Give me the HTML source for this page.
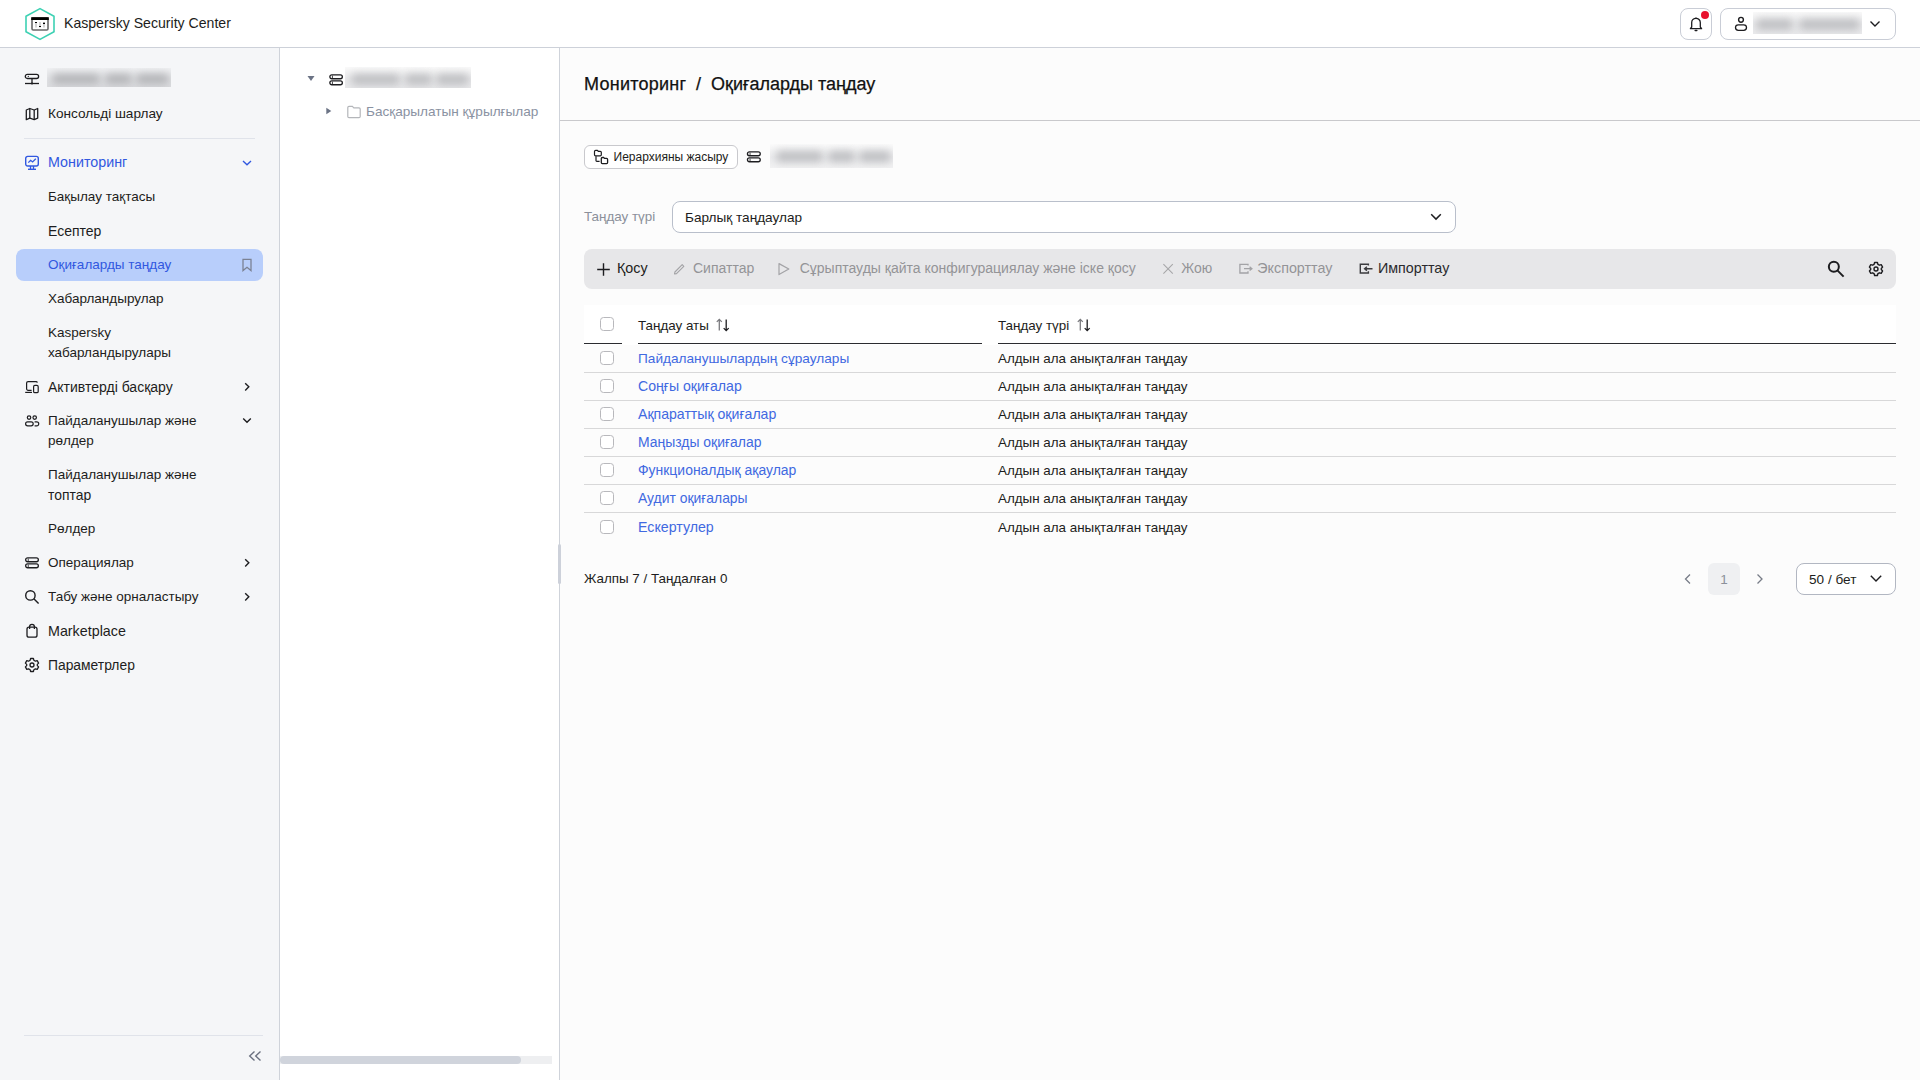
<!DOCTYPE html>
<html><head><meta charset="utf-8">
<style>
*{box-sizing:border-box;margin:0;padding:0}
html,body{width:1920px;height:1080px;overflow:hidden;background:#fcfcfc;font-family:"Liberation Sans",sans-serif;color:#1d1d20}
.a{position:absolute}
.t{position:absolute;white-space:nowrap;height:20px;line-height:20px;font-size:13.5px}
svg{position:absolute;overflow:visible}
#hdr{left:0;top:0;width:1920px;height:48px;background:#fff;border-bottom:1px solid #cdd1d9}
#side{left:0;top:48px;width:280px;height:1032px;background:#f5f6f8;border-right:1px solid #cfd3da}
#tree{left:280px;top:48px;width:280px;height:1032px;background:#fff;border-right:1px solid #cfd3da}
.bz{position:absolute;overflow:hidden;z-index:5}
.bz i{position:absolute;display:block;background:#a9aaad;filter:blur(3.5px);border-radius:4px}
</style></head><body>

<!-- HEADER -->
<div id="hdr" class="a">
  <svg style="left:0;top:0" width="80" height="48">
    <polygon points="40,8.6 54,16.3 54,31.7 40,39.4 26,31.7 26,16.3" fill="none" stroke="#3dd1b3" stroke-width="1.6" stroke-linejoin="round"/>
    <rect x="32" y="18" width="16" height="12" rx="1.2" fill="none" stroke="#6a6a6a" stroke-width="1.6"/>
    <rect x="31.2" y="17.2" width="17.6" height="2.8" fill="#000"/>
    <line x1="36" y1="22" x2="36" y2="27.5" stroke="#bbb" stroke-width="1.2"/>
    <line x1="40" y1="22" x2="40" y2="27.5" stroke="#bbb" stroke-width="1.2"/>
    <line x1="44" y1="22" x2="44" y2="27.5" stroke="#bbb" stroke-width="1.2"/>
    <line x1="35" y1="22.5" x2="37" y2="22.5" stroke="#000" stroke-width="1.2"/>
    <line x1="39" y1="26.5" x2="41" y2="26.5" stroke="#000" stroke-width="1.2"/>
    <line x1="43" y1="23.3" x2="45" y2="23.3" stroke="#000" stroke-width="1.2"/>
  </svg>
  <div class="t" style="left:64px;top:13px;font-size:14.1px">Kaspersky Security Center</div>

  <div class="a" style="left:1680px;top:8px;width:32px;height:32px;border:1px solid #c9cdd6;border-radius:8px"></div>
  <svg style="left:1680px;top:8px" width="32" height="32">
    <path d="M10.4 20.7 L21.6 20.7 L20.3 19 L20.3 14.6 A4.3 4.3 0 0 0 11.7 14.6 L11.7 19 Z" fill="none" stroke="#1d1d20" stroke-width="1.3" stroke-linejoin="round"/><circle cx="16" cy="9.9" r="0.6" fill="#1d1d20"/>
    <path d="M15.2 22.6 L16.8 22.6" stroke="#1d1d20" stroke-width="1.5" stroke-linecap="round"/>
    <circle cx="25" cy="7" r="4" fill="#e8112d"/>
  </svg>
  <div class="a" style="left:1720px;top:8px;width:176px;height:32px;border:1px solid #c9cdd6;border-radius:8px"></div>
  <svg style="left:1720px;top:8px" width="176" height="32">
    <circle cx="21" cy="11.8" r="2.4" fill="none" stroke="#1d1d20" stroke-width="1.4"/>
    <rect x="15.5" y="16.8" width="11" height="5.6" rx="2.8" fill="none" stroke="#1d1d20" stroke-width="1.3"/>
    <path d="M150.5 13.5 L155 18 L159.5 13.5" fill="none" stroke="#1d1d20" stroke-width="1.4"/>
  </svg>
  <div class="bz" style="left:47px;top:68px;width:124px;height:19px;background:linear-gradient(#f0f1f3,#e3e4e7 55%,#dcdde0)"><i style="left:5px;top:6px;width:48px;height:10px;background:#b0b1b4;filter:blur(4px)"></i><i style="left:58px;top:6px;width:27px;height:10px;background:#b0b1b4;filter:blur(4px)"></i><i style="left:89px;top:6px;width:33px;height:10px;background:#b0b1b4;filter:blur(4px)"></i></div>
</div>

<!-- SIDEBAR -->
<div id="side" class="a"></div>
<div id="sidebar-content">
<svg style="left:24px;top:70px" width="16" height="16"><rect x="1.3" y="4.3" width="13.3" height="4.2" rx="2.1" fill="none" stroke="#1d1d20" stroke-width="1.3"/><circle cx="4.3" cy="6.4" r="0.6" fill="#1d1d20"/><line x1="8" y1="8.5" x2="8" y2="13.5" stroke="#1d1d20" stroke-width="1.3"/><line x1="1" y1="13.5" x2="15" y2="13.5" stroke="#1d1d20" stroke-width="1.3"/><circle cx="8" cy="13.5" r="1.1" fill="#1d1d20"/></svg>
<div class="bz" style="left:345px;top:67px;width:126px;height:21px;background:linear-gradient(#fafafa,#ebebed 55%,#e9e9eb)"><i style="left:6px;top:6.5px;width:49px;height:11px;background:#bdbec1;filter:blur(4.2px)"></i><i style="left:60px;top:6.5px;width:27px;height:11px;background:#bdbec1;filter:blur(4.2px)"></i><i style="left:91px;top:6.5px;width:33px;height:11px;background:#bdbec1;filter:blur(4.2px)"></i></div>
<svg style="left:24px;top:106px" width="16" height="16"><path d="M2.3 4 L5.8 2.5 L10.2 4 L13.7 2.5 L13.7 12.2 L10.2 13.7 L5.8 12.2 L2.3 13.7 Z" fill="none" stroke="#1d1d20" stroke-width="1.3" stroke-linejoin="round"/><line x1="5.8" y1="2.5" x2="5.8" y2="12.2" stroke="#1d1d20" stroke-width="1.3"/><line x1="10.2" y1="4" x2="10.2" y2="13.7" stroke="#1d1d20" stroke-width="1.3"/></svg>
<div class="t" style="left:48px;top:104px;font-size:13.6px">Консольді шарлау</div>
<div class="a" style="left:24px;top:138px;width:231px;height:1px;background:#e0e3ea"></div>
<svg style="left:24px;top:155px" width="16" height="16"><rect x="1.7" y="1.4" width="12.6" height="9.6" rx="2" fill="none" stroke="#3158e0" stroke-width="1.4"/><path d="M4.3 7.6 L6.6 5.3 L8.6 6.9 L11.8 3.8" fill="none" stroke="#3158e0" stroke-width="1.3"/><line x1="6.5" y1="11" x2="6.5" y2="14" stroke="#3158e0" stroke-width="1.3"/><line x1="9.5" y1="11" x2="9.5" y2="14" stroke="#3158e0" stroke-width="1.3"/><line x1="4" y1="14.3" x2="12" y2="14.3" stroke="#3158e0" stroke-width="1.4"/></svg>
<div class="t" style="left:48px;top:151.6px;color:#3158e0;font-size:14.3px">Мониторинг</div>
<svg style="left:240px;top:155px" width="14" height="14"><path d="M3 6.1 L7 9.7 L11 6.1" fill="none" stroke="#3158e0" stroke-width="1.4"/></svg>
<div class="t" style="left:48px;top:187px;">Бақылау тақтасы</div>
<div class="t" style="left:48px;top:221px;font-size:14px">Есептер</div>
<div class="a" style="left:16px;top:249px;width:247px;height:32px;background:#b8cefb;border-radius:8px"></div>
<div class="t" style="left:48px;top:255px;color:#3158e0">Оқиғаларды таңдау</div>
<svg style="left:240px;top:257px" width="14" height="16"><path d="M3 2.3 L11 2.3 L11 13.6 L7 10.3 L3 13.6 Z" fill="none" stroke="#7b8294" stroke-width="1.3" stroke-linejoin="miter"/></svg>
<div class="t" style="left:48px;top:289px;">Хабарландырулар</div>
<div class="t" style="left:48px;top:323px;">Kaspersky</div>
<div class="t" style="left:48px;top:343px;">хабарландырулары</div>
<svg style="left:24px;top:379px" width="16" height="16"><path d="M13.4 3.6 A1.5 1.5 0 0 0 11.9 2.6 L4.1 2.6 A1.5 1.5 0 0 0 2.6 4.1 L2.6 9.8 A1.5 1.5 0 0 0 4.1 11.3 L7.6 11.3" fill="none" stroke="#1d1d20" stroke-width="1.2"/><line x1="1.2" y1="13.4" x2="8" y2="13.4" stroke="#1d1d20" stroke-width="1.2"/><rect x="9.6" y="6.4" width="4.6" height="7.3" rx="1.3" fill="none" stroke="#1d1d20" stroke-width="1.2"/></svg>
<div class="t" style="left:48px;top:377px;font-size:14px">Активтерді басқару</div>
<svg style="left:240px;top:379px" width="14" height="16"><path d="M5.2 4.2 L8.8 7.8 L5.2 11.4" fill="none" stroke="#1d1d20" stroke-width="1.4"/></svg>
<svg style="left:24px;top:413px" width="16" height="16"><circle cx="5.05" cy="4.6" r="1.75" fill="none" stroke="#1d1d20" stroke-width="1.2"/><circle cx="10.7" cy="4.6" r="1.75" fill="none" stroke="#1d1d20" stroke-width="1.2"/><rect x="1.6" y="8.8" width="7.6" height="4.1" rx="2.05" fill="none" stroke="#1d1d20" stroke-width="1.2"/><path d="M10.6 8.8 L12.7 8.8 A2.05 2.05 0 0 1 12.7 12.9 L10.6 12.9" fill="none" stroke="#1d1d20" stroke-width="1.2"/></svg>
<div class="t" style="left:48px;top:411px;">Пайдаланушылар және</div>
<div class="t" style="left:48px;top:431px;">рөлдер</div>
<svg style="left:240px;top:413px" width="14" height="14"><path d="M3.2 5.4 L7 9.2 L10.8 5.4" fill="none" stroke="#1d1d20" stroke-width="1.4"/></svg>
<div class="t" style="left:48px;top:465px;">Пайдаланушылар және</div>
<div class="t" style="left:48px;top:485px;font-size:13.9px">топтар</div>
<div class="t" style="left:48px;top:519px;">Рөлдер</div>
<svg style="left:24px;top:555px" width="16" height="16"><rect x="1.65" y="2.85" width="12.7" height="3.9" rx="1.95" fill="none" stroke="#1d1d20" stroke-width="1.3"/><rect x="1.65" y="8.85" width="12.7" height="3.9" rx="1.95" fill="none" stroke="#1d1d20" stroke-width="1.3"/><line x1="4.25" y1="3.6" x2="4.25" y2="6" stroke="#1d1d20" stroke-width="0.8"/><line x1="4.25" y1="9.6" x2="4.25" y2="12" stroke="#1d1d20" stroke-width="0.8"/></svg>
<div class="t" style="left:48px;top:553px;">Операциялар</div>
<svg style="left:240px;top:555px" width="14" height="16"><path d="M5.2 4.2 L8.8 7.8 L5.2 11.4" fill="none" stroke="#1d1d20" stroke-width="1.4"/></svg>
<svg style="left:24px;top:589px" width="16" height="16"><circle cx="6.4" cy="6.4" r="4.7" fill="none" stroke="#1d1d20" stroke-width="1.4"/><line x1="9.8" y1="9.8" x2="14.6" y2="14.6" stroke="#1d1d20" stroke-width="1.4"/></svg>
<div class="t" style="left:48px;top:587px;">Табу және орналастыру</div>
<svg style="left:240px;top:589px" width="14" height="16"><path d="M5.2 4.2 L8.8 7.8 L5.2 11.4" fill="none" stroke="#1d1d20" stroke-width="1.4"/></svg>
<svg style="left:24px;top:623px" width="16" height="16"><rect x="3" y="4.2" width="10" height="10" rx="2" fill="none" stroke="#1d1d20" stroke-width="1.3"/><path d="M5.6 6 L5.6 3.8 A2.4 2.4 0 0 1 10.4 3.8 L10.4 6" fill="none" stroke="#1d1d20" stroke-width="1.3"/></svg>
<div class="t" style="left:48px;top:621px;font-size:14.3px">Marketplace</div>
<svg style="left:24px;top:657px" width="16" height="16"><path d="M6.6 1.5 L9.4 1.5 L9.9 3.3 L11.4 4.2 L13.2 3.7 L14.6 6.1 L13.3 7.4 L13.3 8.6 L14.6 9.9 L13.2 12.3 L11.4 11.8 L9.9 12.7 L9.4 14.5 L6.6 14.5 L6.1 12.7 L4.6 11.8 L2.8 12.3 L1.4 9.9 L2.7 8.6 L2.7 7.4 L1.4 6.1 L2.8 3.7 L4.6 4.2 L6.1 3.3 Z" fill="none" stroke="#1d1d20" stroke-width="1.3" stroke-linejoin="round"/><circle cx="8" cy="8" r="2" fill="none" stroke="#1d1d20" stroke-width="1.3"/></svg>
<div class="t" style="left:48px;top:655px;font-size:13.85px">Параметрлер</div>
<div class="a" style="left:24px;top:1035px;width:239px;height:1px;background:#e0e3ea"></div>
<svg style="left:246px;top:1048px" width="18" height="16"><path d="M8.5 3.5 L3.7 8 L8.5 12.5 M14.5 3.5 L9.7 8 L14.5 12.5" fill="none" stroke="#6b7180" stroke-width="1.4"/></svg>
</div>

<!-- TREE -->
<div id="tree" class="a"></div>
<svg style="left:304px;top:72px" width="12" height="12"><path d="M3.5 4 L10.5 4 L7 9 Z" fill="#6b7385"/></svg>
<svg style="left:328px;top:72px" width="16" height="16"><rect x="1.85" y="2.85" width="12.5" height="3.9" rx="1.95" fill="none" stroke="#1d1d20" stroke-width="1.3"/><rect x="1.85" y="8.85" width="12.5" height="3.9" rx="1.95" fill="none" stroke="#1d1d20" stroke-width="1.3"/><line x1="4.45" y1="3.6" x2="4.45" y2="6" stroke="#1d1d20" stroke-width="0.8"/><line x1="4.45" y1="9.6" x2="4.45" y2="12" stroke="#1d1d20" stroke-width="0.8"/></svg>
<div class="bz" style="left:1753px;top:12px;width:109px;height:22px;background:linear-gradient(#fafafa,#ececee 55%,#ebebed)"><i style="left:3px;top:7px;width:37px;height:11px;background:#bdbec1;filter:blur(4.2px)"></i><i style="left:46px;top:7px;width:61px;height:11px;background:#bdbec1;filter:blur(4.2px)"></i></div>
<svg style="left:322px;top:105px" width="12" height="12"><path d="M4.3 2.8 L9.3 6 L4.3 9.2 Z" fill="#6b7385"/></svg>
<svg style="left:346px;top:104px" width="16" height="16"><path d="M1.8 3.6 A1.2 1.2 0 0 1 3 2.4 L6.4 2.4 L7.8 3.8 L13 3.8 A1.2 1.2 0 0 1 14.2 5 L14.2 12.4 A1.2 1.2 0 0 1 13 13.6 L3 13.6 A1.2 1.2 0 0 1 1.8 12.4 Z" fill="none" stroke="#b4b6ba" stroke-width="1.2"/></svg>
<div class="t" style="left:366px;top:102.3px;color:#8a92a2;font-size:13.6px">Басқарылатын құрылғылар</div>
<div class="a" style="left:280px;top:1056px;width:272px;height:8px;background:#eeeff1"></div>
<div class="a" style="left:280px;top:1056px;width:241px;height:8px;background:#d0d4dc;border-radius:4px"></div>
<div class="a" style="left:558px;top:544px;width:3px;height:40px;background:#cdd1da;border-radius:2px"></div>

<!-- MAIN -->
<div id="mainc">
<div class="t" style="left:584px;top:72px;height:24px;line-height:24px;font-size:18px;-webkit-text-stroke:0.25px #111;color:#111;letter-spacing:0.25px">Мониторинг</div><div class="t" style="left:696px;top:72px;height:24px;line-height:24px;font-size:18px;-webkit-text-stroke:0.25px #111;color:#111">/</div><div class="t" style="left:711px;top:72px;height:24px;line-height:24px;font-size:18px;-webkit-text-stroke:0.25px #111;color:#111">Оқиғаларды таңдау</div>
<div class="a" style="left:560px;top:120px;width:1360px;height:1px;background:#c9c9cc"></div>
<div class="a" style="left:584px;top:145px;width:154px;height:24px;border:1px solid #c9c9cd;border-radius:6px;background:#fff"></div>
<svg style="left:592px;top:148px" width="18" height="18"><path d="M2.5 3.6 A1.2 1.2 0 0 1 3.7 2.4 L5.3 2.4 L6.3 3.3 L8.3 3.3 A1 1 0 0 1 9.3 4.3 L9.3 6.8 A1 1 0 0 1 8.3 7.8 L3.5 7.8 A1 1 0 0 1 2.5 6.8 Z" fill="none" stroke="#1d1d20" stroke-width="1.2"/><path d="M4 8.3 L4 12.6 A0.8 0.8 0 0 0 4.8 13.4 L7.6 13.4" fill="none" stroke="#1d1d20" stroke-width="1.2"/><path d="M9.3 10.6 A1.1 1.1 0 0 1 10.4 9.5 L11.6 9.5 L12.6 10.4 L14.6 10.4 A1 1 0 0 1 15.6 11.4 L15.6 14.6 A1 1 0 0 1 14.6 15.6 L10.3 15.6 A1 1 0 0 1 9.3 14.6 Z" fill="none" stroke="#1d1d20" stroke-width="1.3"/></svg>
<div class="t" style="left:613.5px;top:149px;height:16px;line-height:16px;font-size:12px">Иерархияны жасыру</div>
<svg style="left:746px;top:149px" width="16" height="16"><rect x="1.45" y="2.85" width="12.8" height="3.9" rx="1.95" fill="none" stroke="#1d1d20" stroke-width="1.3"/><rect x="1.45" y="8.85" width="12.8" height="3.9" rx="1.95" fill="none" stroke="#1d1d20" stroke-width="1.3"/><line x1="4.05" y1="3.6" x2="4.05" y2="6" stroke="#1d1d20" stroke-width="0.8"/><line x1="4.05" y1="9.6" x2="4.05" y2="12" stroke="#1d1d20" stroke-width="0.8"/></svg>
<div class="bz" style="left:770px;top:144px;width:123px;height:24px;background:linear-gradient(#fbfbfb,#ededef 55%,#f2f2f3)"><i style="left:6px;top:7px;width:47px;height:11px;background:#bdbec1;filter:blur(4.2px)"></i><i style="left:58px;top:7px;width:27px;height:11px;background:#bdbec1;filter:blur(4.2px)"></i><i style="left:89px;top:7px;width:32px;height:11px;background:#bdbec1;filter:blur(4.2px)"></i></div>
<div class="t" style="left:584px;top:207.4px;color:#8b909a;font-size:13.4px">Таңдау түрі</div>
<div class="a" style="left:672px;top:201px;width:784px;height:32px;border:1px solid #b9bfcb;border-radius:8px;background:#fff"></div>
<div class="t" style="left:685px;top:208.3px;font-size:13.6px">Барлық таңдаулар</div>
<svg style="left:1428px;top:209px" width="16" height="16"><path d="M3.2 5.3 L8 10.1 L12.8 5.3" fill="none" stroke="#1d1d20" stroke-width="1.5"/></svg>
<div class="a" style="left:584px;top:249px;width:1312px;height:40px;background:#e7e7e9;border-radius:8px"></div>
<svg style="left:595px;top:261px" width="16" height="16"><path d="M8.5 2.3 L8.5 14.8 M2.2 8.5 L14.8 8.5" stroke="#1d1d20" stroke-width="1.4"/></svg>
<div class="t" style="left:617px;top:258px;font-size:14.3px">Қосу</div>
<svg style="left:671px;top:261px" width="16" height="16"><path d="M3.5 13 L3.9 11 L11.2 3.7 L12.8 5.3 L5.5 12.6 Z" fill="none" stroke="#a3a3a6" stroke-width="1.1" stroke-linejoin="round"/></svg>
<div class="t" style="left:693px;top:258px;color:#949497;font-size:14px">Сипаттар</div>
<svg style="left:776px;top:261px" width="16" height="16"><path d="M3 2.6 L12.8 8 L3 13.6 Z" fill="none" stroke="#a3a3a6" stroke-width="1.2" stroke-linejoin="round"/></svg>
<div class="t" style="left:799.7px;top:258px;color:#949497;font-size:14px">Сұрыптауды қайта конфигурациялау және іске қосу</div>
<svg style="left:1160px;top:261px" width="16" height="16"><path d="M3.4 3.2 L12.8 12.6 M12.8 3.2 L3.4 12.6" stroke="#a6a6a8" stroke-width="1.05"/></svg>
<div class="t" style="left:1181.3px;top:258px;color:#949497;font-size:14px">Жою</div>
<svg style="left:1236px;top:260px" width="18" height="18"><path d="M12 5.6 L12 4.3 L3.9 4.3 L3.9 13 L12 13 L12 11.3" fill="none" stroke="#a3a3a6" stroke-width="1.3"/><path d="M8 8.7 L15.7 8.7 M13.6 6.8 L15.9 8.7 L13.6 10.6" fill="none" stroke="#a3a3a6" stroke-width="1.3"/></svg>
<div class="t" style="left:1257.3px;top:258px;color:#949497;font-size:14.3px">Экспорттау</div>
<svg style="left:1356px;top:260px" width="18" height="18"><path d="M12.4 5.6 L12.4 4.3 L4.3 4.3 L4.3 13 L12.4 13 L12.4 11.3" fill="none" stroke="#3b3b3e" stroke-width="1.4"/><path d="M16.5 8.7 L8.8 8.7 M10.9 6.8 L8.6 8.7 L10.9 10.6" fill="none" stroke="#3b3b3e" stroke-width="1.4"/></svg>
<div class="t" style="left:1378px;top:258px;font-size:14.3px;color:#2a2a2d">Импорттау</div>
<svg style="left:1826px;top:259px" width="20" height="20"><circle cx="7.85" cy="7.8" r="5" fill="none" stroke="#1d1d20" stroke-width="2"/><line x1="11.4" y1="11.4" x2="17.6" y2="17.6" stroke="#1d1d20" stroke-width="2"/></svg>
<svg style="left:1868px;top:261px" width="16" height="16"><path d="M6.6 1.5 L9.4 1.5 L9.9 3.3 L11.4 4.2 L13.2 3.7 L14.6 6.1 L13.3 7.4 L13.3 8.6 L14.6 9.9 L13.2 12.3 L11.4 11.8 L9.9 12.7 L9.4 14.5 L6.6 14.5 L6.1 12.7 L4.6 11.8 L2.8 12.3 L1.4 9.9 L2.7 8.6 L2.7 7.4 L1.4 6.1 L2.8 3.7 L4.6 4.2 L6.1 3.3 Z" fill="none" stroke="#1d1d20" stroke-width="1.4" stroke-linejoin="round"/><circle cx="8" cy="8" r="2" fill="none" stroke="#1d1d20" stroke-width="1.4"/></svg>
<div class="a" style="left:584px;top:305px;width:1312px;height:40px;background:#fff"></div>
<div class="a" style="left:600px;top:317px;width:14px;height:14px;border:1px solid #b8b8bc;border-radius:3.5px;background:#fff"></div>
<div class="t" style="left:638px;top:316px;font-size:13.4px">Таңдау аты</div>
<svg style="left:715px;top:317px" width="16" height="16"><path d="M4.3 13.6 L4.3 2.4 M1.8 4.9 L4.3 2.4 L6.8 4.9" fill="none" stroke="#7a7a7e" stroke-width="1.3"/><path d="M11.2 2.4 L11.2 13.6 M8.7 11.1 L11.2 13.6 L13.7 11.1" fill="none" stroke="#1d1d20" stroke-width="1.3"/></svg>
<div class="t" style="left:998px;top:316px;font-size:13.4px">Таңдау түрі</div>
<svg style="left:1076px;top:317px" width="16" height="16"><path d="M4.3 13.6 L4.3 2.4 M1.8 4.9 L4.3 2.4 L6.8 4.9" fill="none" stroke="#7a7a7e" stroke-width="1.3"/><path d="M11.2 2.4 L11.2 13.6 M8.7 11.1 L11.2 13.6 L13.7 11.1" fill="none" stroke="#1d1d20" stroke-width="1.3"/></svg>
<div class="a" style="left:584px;top:343px;width:38px;height:1px;background:#2b2c30"></div>
<div class="a" style="left:638px;top:343px;width:344px;height:1px;background:#2b2c30"></div>
<div class="a" style="left:998px;top:343px;width:898px;height:1px;background:#2b2c30"></div>
<div class="a" style="left:600px;top:351px;width:14px;height:14px;border:1px solid #b8b8bc;border-radius:3.5px;background:#fff"></div>
<div class="t" style="left:638px;top:349px;color:#4169e1;font-size:13.65px">Пайдаланушылардың сұраулары</div>
<div class="t" style="left:998px;top:349px;font-size:13.4px">Алдын ала анықталған таңдау</div>
<div class="a" style="left:584px;top:372px;width:1312px;height:1px;background:#d8d8d9"></div>
<div class="a" style="left:600px;top:379px;width:14px;height:14px;border:1px solid #b8b8bc;border-radius:3.5px;background:#fff"></div>
<div class="t" style="left:638px;top:376.4px;color:#4169e1;font-size:14.1px">Соңғы оқиғалар</div>
<div class="t" style="left:998px;top:377px;font-size:13.4px">Алдын ала анықталған таңдау</div>
<div class="a" style="left:584px;top:400px;width:1312px;height:1px;background:#d8d8d9"></div>
<div class="a" style="left:600px;top:407px;width:14px;height:14px;border:1px solid #b8b8bc;border-radius:3.5px;background:#fff"></div>
<div class="t" style="left:638px;top:404.4px;color:#4169e1;font-size:14.1px">Ақпараттық оқиғалар</div>
<div class="t" style="left:998px;top:405px;font-size:13.4px">Алдын ала анықталған таңдау</div>
<div class="a" style="left:584px;top:428px;width:1312px;height:1px;background:#d8d8d9"></div>
<div class="a" style="left:600px;top:435px;width:14px;height:14px;border:1px solid #b8b8bc;border-radius:3.5px;background:#fff"></div>
<div class="t" style="left:638px;top:432.4px;color:#4169e1;font-size:13.95px">Маңызды оқиғалар</div>
<div class="t" style="left:998px;top:433px;font-size:13.4px">Алдын ала анықталған таңдау</div>
<div class="a" style="left:584px;top:456px;width:1312px;height:1px;background:#d8d8d9"></div>
<div class="a" style="left:600px;top:463px;width:14px;height:14px;border:1px solid #b8b8bc;border-radius:3.5px;background:#fff"></div>
<div class="t" style="left:638px;top:460.4px;color:#4169e1;font-size:13.95px">Функционалдық ақаулар</div>
<div class="t" style="left:998px;top:461px;font-size:13.4px">Алдын ала анықталған таңдау</div>
<div class="a" style="left:584px;top:484px;width:1312px;height:1px;background:#d8d8d9"></div>
<div class="a" style="left:600px;top:491px;width:14px;height:14px;border:1px solid #b8b8bc;border-radius:3.5px;background:#fff"></div>
<div class="t" style="left:638px;top:488.4px;color:#4169e1;font-size:13.9px">Аудит оқиғалары</div>
<div class="t" style="left:998px;top:489px;font-size:13.4px">Алдын ала анықталған таңдау</div>
<div class="a" style="left:584px;top:512px;width:1312px;height:1px;background:#d8d8d9"></div>
<div class="a" style="left:600px;top:520px;width:14px;height:14px;border:1px solid #b8b8bc;border-radius:3.5px;background:#fff"></div>
<div class="t" style="left:638px;top:517.4px;color:#4169e1;font-size:14.2px">Ескертулер</div>
<div class="t" style="left:998px;top:518px;font-size:13.4px">Алдын ала анықталған таңдау</div>
<div class="t" style="left:584px;top:569px;font-size:13.4px">Жалпы 7 / Таңдалған 0</div>
<svg style="left:1680px;top:571px" width="16" height="16"><path d="M10 3.5 L5.5 8 L10 12.5" fill="none" stroke="#777c87" stroke-width="1.3"/></svg>
<div class="a" style="left:1708px;top:563px;width:32px;height:32px;background:#eff0f2;border-radius:6px"></div>
<div class="t" style="left:1708px;top:570px;width:32px;text-align:center;color:#8b909a;font-size:13.5px">1</div>
<svg style="left:1752px;top:571px" width="16" height="16"><path d="M5.5 3.5 L10 8 L5.5 12.5" fill="none" stroke="#777c87" stroke-width="1.3"/></svg>
<div class="a" style="left:1796px;top:563px;width:100px;height:32px;border:1px solid #b2b7c2;border-radius:8px;background:#fff"></div>
<div class="t" style="left:1809px;top:570.3px;font-size:13.6px">50 / бет</div>
<svg style="left:1868px;top:571px" width="16" height="16"><path d="M2.8 4.8 L8 10 L13.2 4.8" fill="none" stroke="#1d1d20" stroke-width="1.4"/></svg>
</div>

</body></html>
